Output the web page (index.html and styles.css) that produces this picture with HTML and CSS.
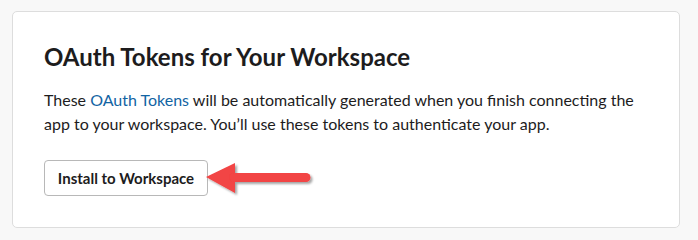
FILE: index.html
```html
<!DOCTYPE html>
<html>
<head>
<meta charset="utf-8">
<link rel="stylesheet" href="styles.css">
</head>
<body>
<div class="card">
  <h2 class="title">OAuth Tokens for Your Workspace</h2>
  <p class="desc">These <a class="link" href="#">OAuth Tokens</a> will be automatically generated when you finish connecting the app to your workspace. You’ll use these tokens to authenticate your app.</p>
  <div class="actions">
    <button class="btn">Install to Workspace</button>
    <svg class="arrow" width="110" height="40" viewBox="0 0 110 40">
      <defs>
        <filter id="sh" x="-10%" y="-20%" width="130%" height="160%">
          <feDropShadow dx="2" dy="2" stdDeviation="1.2" flood-color="#000" flood-opacity="0.35"/>
        </filter>
      </defs>
      <g filter="url(#sh)">
        <polygon points="1,17 30,3 30,33" fill="#f24444"/>
        <line x1="29" y1="17.5" x2="101" y2="17.5" stroke="#f24444" stroke-width="9" stroke-linecap="round"/>
      </g>
    </svg>
  </div>
</div>
</body>
</html>
```

FILE: styles.css
```css
html, body {
  margin: 0;
  padding: 0;
}
body {
  background: #f8f8f8;
  font-family: Lato, "Noto Sans", sans-serif;
  color: #1d1c1d;
  padding: 11px 0 0 12px;
}
.card {
  box-sizing: border-box;
  width: 668px;
  height: 217px;
  background: #fff;
  border: 1px solid #dddddd;
  border-radius: 5px;
  padding: 30px 31px 0 31px;
}
.title {
  margin: 0;
  font-size: 24px;
  line-height: 30px;
  font-weight: 700;
  color: #1d1c1d;
}
.desc {
  margin: 16px 0 0 0;
  font-size: 16px;
  line-height: 24px;
  color: #1d1c1d;
}
.link {
  color: #1264a3;
  text-decoration: none;
}
.actions {
  position: relative;
  margin-top: 24px;
  display: flex;
  align-items: center;
}
.btn {
  box-sizing: border-box;
  height: 36px;
  width: 164px;
  background: #fff;
  border: 1px solid #b8b8b8;
  border-radius: 4px;
  font-family: Lato, "Noto Sans", sans-serif;
  font-size: 15px;
  font-weight: 700;
  color: #1d1c1d;
  padding: 0;
}
.arrow {
  position: absolute;
  left: 161px;
  top: 0px;
}
```
